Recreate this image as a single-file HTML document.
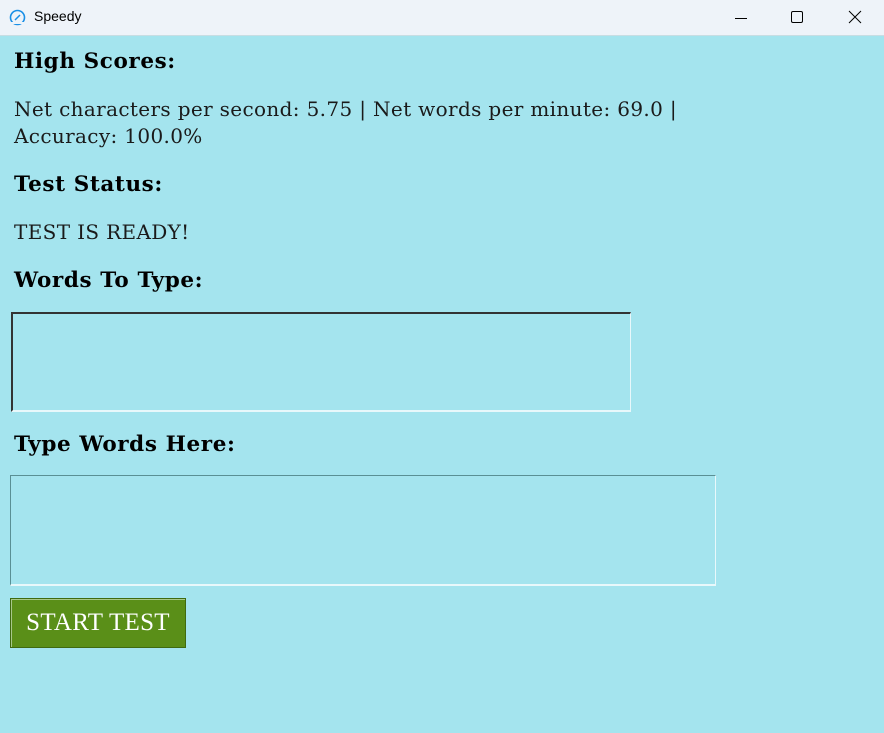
<!DOCTYPE html>
<html><head><meta charset="utf-8"><style>
*{margin:0;padding:0;box-sizing:border-box}
body{width:884px;height:733px;background:#a4e4ee;position:relative;overflow:hidden;font-family:"DejaVu Serif","Liberation Serif",serif;color:#111}
.tb{position:absolute;left:0;top:0;width:884px;height:36px;background:#eef3f9;border-bottom:1px solid #c8dde3}
.tb .t{position:absolute;left:34px;top:8px;font-family:"Liberation Sans",sans-serif;font-size:14px;color:#000}
.h{position:absolute;left:14px;font-weight:bold;font-size:21.5px;letter-spacing:0.6px;color:#000}
.p{position:absolute;left:14px;font-size:20px;line-height:27px;letter-spacing:0.35px;color:#1a1a1a}
.box{position:absolute}
</style></head><body>
<div class="tb">
<svg style="position:absolute;left:9px;top:9px" width="17" height="17" viewBox="0 0 17 17"><circle cx="8.5" cy="8.5" r="7" fill="none" stroke="#1a8fe6" stroke-width="1.6"/><path d="M6 11 L11 6" stroke="#1a8fe6" stroke-width="1.5"/><path d="M2 14 H15" stroke="#eef3f9" stroke-width="2"/></svg>
<span class="t">Speedy</span>
<svg style="position:absolute;left:734px;top:11px" width="14" height="14"><path d="M1 7.5H13" stroke="#000" stroke-width="1"/></svg>
<svg style="position:absolute;left:790px;top:10px" width="14" height="14"><rect x="1.5" y="1.5" width="11" height="11" rx="1.5" fill="none" stroke="#000" stroke-width="1"/></svg>
<svg style="position:absolute;left:848px;top:10px" width="14" height="14"><path d="M1 1L13 13M13 1L1 13" stroke="#000" stroke-width="1"/></svg>
</div>
<div class="h" style="top:49px">High Scores:</div>
<div class="p" style="top:96px">Net characters per second: 5.75 | Net words per minute: 69.0 |<br>Accuracy: 100.0%</div>
<div class="h" style="top:172px">Test Status:</div>
<div class="p" style="top:219px">TEST IS READY!</div>
<div class="h" style="top:268px">Words To Type:</div>
<div class="box" style="left:11px;top:312px;width:620px;height:100px;border-top:2px solid #333;border-left:2px solid #333;border-right:1px solid #e8f8fb;border-bottom:2px solid #e8f8fb"></div>
<div class="h" style="top:432px">Type Words Here:</div>
<div class="box" style="left:10px;top:475px;width:706px;height:111px;border-top:1px solid #5a8f94;border-left:1px solid #5a8f94;border-right:1px solid #e8f8fb;border-bottom:2px solid #e8f8fb"></div>
<div class="box" style="left:10px;top:598px;width:176px;height:50px;background:#5a8f18;border:1px solid #3f6a10;box-shadow:inset 1px 1px 0 #a8c88a;color:#fff;font-size:25px;line-height:48px;text-align:center;font-family:'Liberation Serif',serif;letter-spacing:0.3px">START TEST</div>
</body></html>
